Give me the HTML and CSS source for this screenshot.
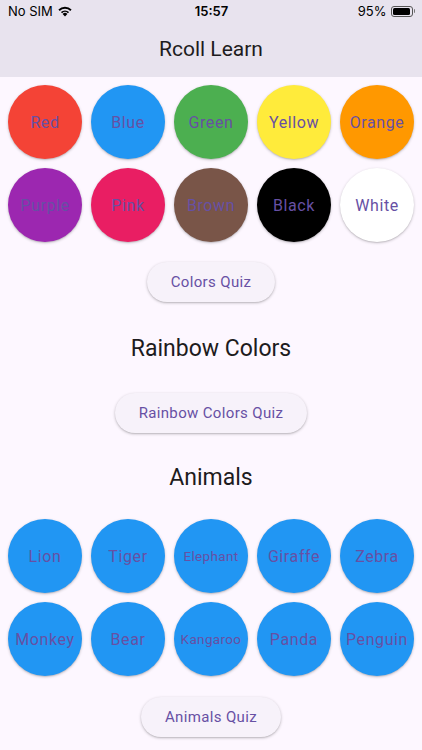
FILE: index.html
```html
<!DOCTYPE html>
<html>
<head>
<meta charset="utf-8">
<link rel="stylesheet" href="styles.css">
</head>
<body>
<div class="screen">
  <header class="appbar">
    <div class="status">
      <div class="st-left">No SIM
        <svg class="wifi" width="16" height="12" viewBox="0 0 16 12">
          <path d="M8 11.5 L5.6 8.9 A3.4 3.4 0 0 1 10.4 8.9 Z" fill="#000"/>
          <path d="M3.9 7.1 A5.8 5.8 0 0 1 12.1 7.1 L10.9 8.3 A4.1 4.1 0 0 0 5.1 8.3 Z" fill="#000"/>
          <path d="M1.4 4.6 A9.3 9.3 0 0 1 14.6 4.6 L13.3 5.9 A7.5 7.5 0 0 0 2.7 5.9 Z" fill="#000"/>
        </svg>
      </div>
      <div class="st-time">15:57</div>
      <div class="st-right">95%
        <span class="battery"><span class="battery-fill"></span></span><span class="nub"></span>
      </div>
    </div>
    <div class="toolbar">Rcoll Learn</div>
  </header>

  <main class="content">
    <section class="grid">
      <div class="circle c-red"><span>Red</span></div>
      <div class="circle c-blue"><span>Blue</span></div>
      <div class="circle c-green"><span>Green</span></div>
      <div class="circle c-yellow"><span>Yellow</span></div>
      <div class="circle c-orange"><span>Orange</span></div>
      <div class="circle c-purple"><span>Purple</span></div>
      <div class="circle c-pink"><span>Pink</span></div>
      <div class="circle c-brown"><span>Brown</span></div>
      <div class="circle c-black"><span>Black</span></div>
      <div class="circle c-white"><span>White</span></div>
    </section>
    <div class="btn-row first"><button class="btn">Colors Quiz</button></div>

    <h2 class="heading h-rainbow">Rainbow Colors</h2>
    <div class="btn-row"><button class="btn">Rainbow Colors Quiz</button></div>

    <h2 class="heading h-animals">Animals</h2>
    <section class="grid">
      <div class="circle c-blue"><span>Lion</span></div>
      <div class="circle c-blue"><span>Tiger</span></div>
      <div class="circle c-blue"><span class="small">Elephant</span></div>
      <div class="circle c-blue"><span>Giraffe</span></div>
      <div class="circle c-blue"><span>Zebra</span></div>
      <div class="circle c-blue"><span>Monkey</span></div>
      <div class="circle c-blue"><span>Bear</span></div>
      <div class="circle c-blue"><span class="small">Kangaroo</span></div>
      <div class="circle c-blue"><span>Panda</span></div>
      <div class="circle c-blue"><span>Penguin</span></div>
    </section>
    <div class="btn-row last"><button class="btn">Animals Quiz</button></div>
  </main>
</div>
</body>
</html>
```

FILE: styles.css
```css
* { box-sizing: border-box; }
html, body {
  margin: 0;
  padding: 0;
  background: #fdf7ff;
}
body {
  font-family: Roboto, "Noto Sans", "Liberation Sans", sans-serif;
  width: 422px;
  height: 750px;
  overflow: hidden;
}
.screen {
  width: 422px;
  height: 750px;
  background: #fdf7ff;
}
.appbar {
  background: #e8e3ee;
  height: 77px;
  display: flex;
  flex-direction: column;
}
.status {
  height: 22px;
  display: grid;
  grid-template-columns: 1fr auto 1fr;
  align-items: center;
  padding: 0 7px 0 8px;
  font-family: Inter, Roboto, "Liberation Sans", sans-serif;
  font-size: 13px;
  color: #000;
}
.st-left {
  display: flex;
  align-items: center;
  gap: 4px;
}
.wifi { display: block; margin-top: -1px; }
.st-time {
  font-weight: 600;
  text-align: center;
}
.st-right {
  display: flex;
  align-items: center;
  justify-content: flex-end;
  gap: 3px;
}
.battery {
  display: inline-block;
  width: 22px;
  height: 11px;
  border: 1px solid #555;
  border-radius: 3px;
  padding: 1px;
  margin-left: 1px;
}
.battery-fill {
  display: block;
  width: 95%;
  height: 100%;
  background: #000;
  border-radius: 1.5px;
}
.nub {
  display: inline-block;
  width: 1.5px;
  height: 4px;
  background: #777;
  border-radius: 0 1px 1px 0;
  margin-left: -2px;
}
.toolbar {
  flex: 1;
  display: flex;
  align-items: center;
  justify-content: center;
  font-size: 21px;
  color: #1d1b20;
  padding-bottom: 1px;
}
.content {
  display: flex;
  flex-direction: column;
}
.grid {
  display: grid;
  grid-template-columns: repeat(5, 1fr);
  gap: 9px;
  padding: 8px;
}
.circle {
  aspect-ratio: 1 / 1;
  border-radius: 50%;
  display: flex;
  align-items: center;
  justify-content: center;
  box-shadow: 0 1px 3px rgba(0,0,0,0.22), 0 1px 1px rgba(0,0,0,0.08);
  color: #6750a4;
  font-size: 16px;
  letter-spacing: 0.6px;
  white-space: nowrap;
  padding-top: 1px;
}
.circle .small { font-size: 13.5px; letter-spacing: 0.35px; margin-top: -1px; }
.c-red { background: #f44336; }
.c-blue { background: #2196f3; }
.c-green { background: #4caf50; }
.c-yellow { background: #ffeb3b; }
.c-orange { background: #ff9800; }
.c-purple { background: #9c27b0; }
.c-pink { background: #e91e63; }
.c-brown { background: #795548; }
.c-black { background: #000000; }
.c-white { background: #ffffff; }
.btn-row {
  display: flex;
  justify-content: center;
}
.btn-row.first { margin-top: 12px; }
.btn-row.last { margin-top: 13px; }
.btn {
  height: 40px;
  padding: 0 24px;
  border: none;
  border-radius: 20px;
  background: #f7f2fa;
  color: #6750a4;
  font-family: Roboto, "Noto Sans", sans-serif;
  font-size: 15px;
  font-weight: 400;
  letter-spacing: 0.35px;
  box-shadow: 0 1px 3px rgba(0,0,0,0.25), 0 1px 1px rgba(0,0,0,0.06);
}
.heading {
  margin: 0;
  text-align: center;
  font-weight: 400;
  font-size: 23px;
  line-height: 32px;
  color: #1d1b20;
}
.h-rainbow { margin: 31px 0 28px; }
.h-animals { margin: 29px 0 17px; }
```
